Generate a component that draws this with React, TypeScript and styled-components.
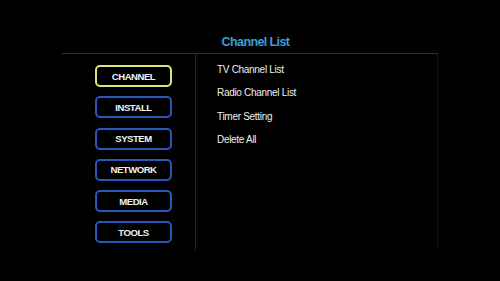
import React from "react";
import styled, { createGlobalStyle } from "styled-components";

const Global = createGlobalStyle`
  html, body { margin: 0; padding: 0; background: #000; }
  body { width: 500px; height: 281px; overflow: hidden; font-family: "Liberation Sans", Arial, sans-serif; }
`;

const Screen = styled.div`
  width: 500px;
  height: 281px;
  background: #000;
  display: flex;
  flex-direction: column;
  align-items: center;
`;

const Panel = styled.div`
  width: 376px;
  display: flex;
  flex-direction: column;
`;

const Header = styled.div`
  height: 54px;
  display: flex;
  align-items: flex-end;
  justify-content: center;
  padding-left: 11px;
  box-sizing: border-box;
  border-bottom: 1px solid #26313b;
`;

const Title = styled.h1`
  margin: 0 0 4px 0;
  font-size: 12.5px;
  font-weight: bold;
  letter-spacing: -0.6px;
  color: #3a9fd6;
  line-height: 14px;
`;

const Body = styled.div`
  display: flex;
  height: 197px;
`;

const Menu = styled.div`
  width: 134px;
  border-right: 1px solid #22272d;
  display: flex;
  flex-direction: column;
  gap: 9.3px;
  padding: 11px 0 0 33px;
  box-sizing: border-box;
`;

const MenuButton = styled.div<{ $active?: boolean }>`
  width: 77px;
  height: 22px;
  box-sizing: border-box;
  border: 2px solid ${(p) => (p.$active ? "#dfe275" : "#2858bc")};
  border-radius: 5px;
  display: flex;
  align-items: center;
  justify-content: center;
  color: #f0f0f0;
  font-size: 9.6px;
  font-weight: bold;
  letter-spacing: -0.5px;
`;

const Content = styled.div`
  flex: 1;
  display: flex;
  flex-direction: column;
  padding: 4px 0 0 21px;
  border-right: 1px solid #101418;
  margin-bottom: 4px;
`;

const Item = styled.div`
  height: 23.4px;
  line-height: 23.4px;
  color: #f0f0f0;
  font-size: 10px;
  letter-spacing: -0.3px;
`;

const menu = ["CHANNEL", "INSTALL", "SYSTEM", "NETWORK", "MEDIA", "TOOLS"];
const items = ["TV Channel List", "Radio Channel List", "Timer Setting", "Delete All"];

export default function App() {
  return (
    <>
      <Global />
      <Screen>
        <Panel>
          <Header>
            <Title>Channel List</Title>
          </Header>
          <Body>
            <Menu>
              {menu.map((m, i) => (
                <MenuButton key={m} $active={i === 0}>
                  {m}
                </MenuButton>
              ))}
            </Menu>
            <Content>
              {items.map((t) => (
                <Item key={t}>{t}</Item>
              ))}
            </Content>
          </Body>
        </Panel>
      </Screen>
    </>
  );
}
